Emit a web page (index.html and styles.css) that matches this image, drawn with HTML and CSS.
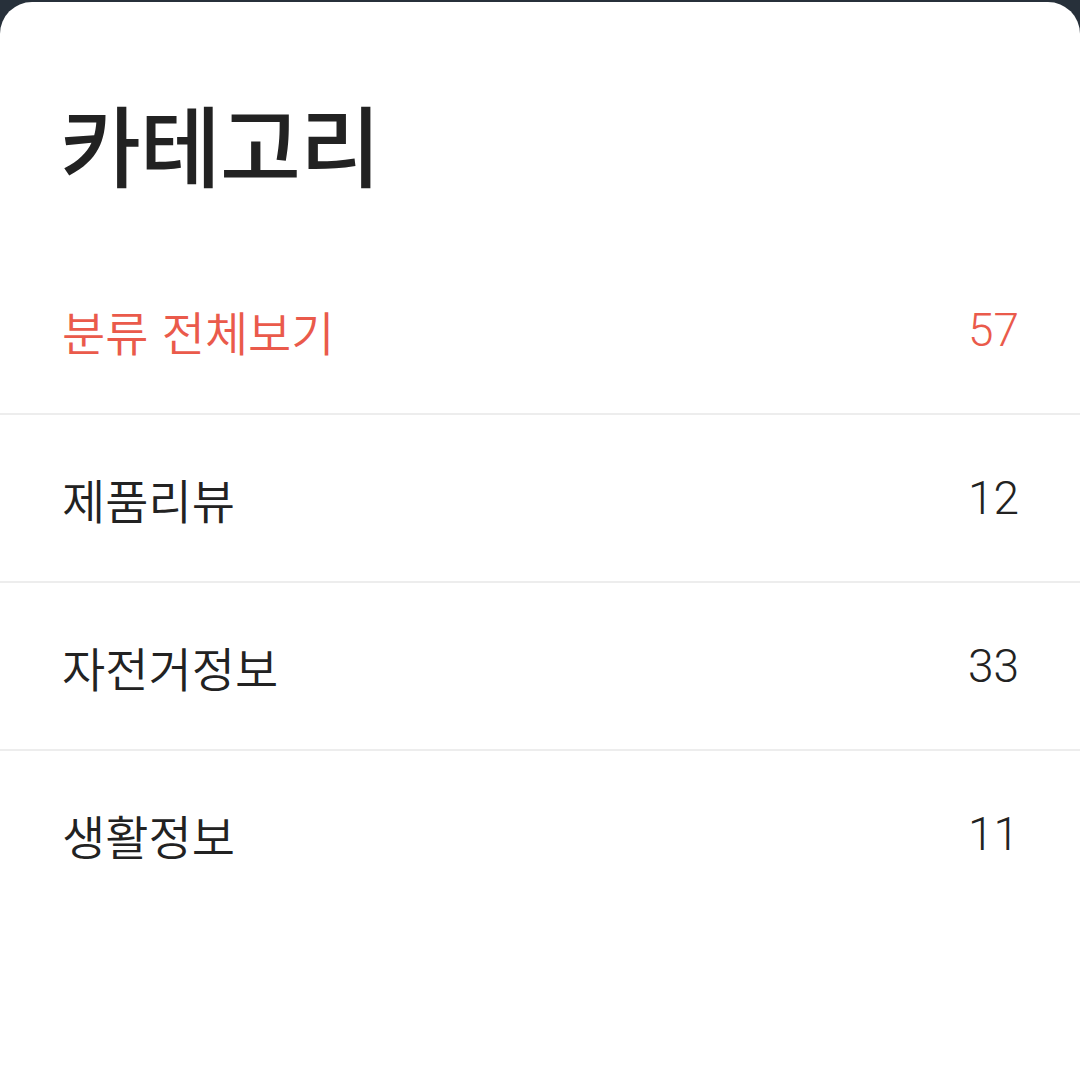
FILE: index.html
```html
<!DOCTYPE html>
<html lang="ko">
<head>
	<meta charset="utf-8">
	<title>카테고리</title>
	<link rel="stylesheet" href="styles.css">
</head>
<body>

	<div class="sheet">
		<h1 class="title">카테고리</h1>

		<ul class="category-list">
			<li class="category active"><span class="name">분류 전체보기</span><span class="count">57</span></li>
			<li class="category"><span class="name">제품리뷰</span><span class="count">12</span></li>
			<li class="category"><span class="name">자전거정보</span><span class="count">33</span></li>
			<li class="category"><span class="name">생활정보</span><span class="count">11</span></li>
		</ul>
	</div>

</body>
</html>
```

FILE: styles.css
```css
html, body{
	margin: 0;
	height: 100%;
}

body{
	background: #27303a;
	padding-top: 2px;
	box-sizing: border-box;
	font-family: "Noto Sans CJK KR", "Noto Sans", sans-serif;
	color: #222;
}

.sheet{
	background: #fff;
	border-radius: 32px 32px 0 0;
	height: 100%;
	padding-top: 84px;
	box-sizing: border-box;
}

.title{
	margin: 0 60px;
	font-size: 88px;
	font-weight: 500;
	line-height: 112px;
	letter-spacing: -1px;
}

.category-list{
	list-style: none;
	margin: 49px 0 0;
	padding: 0;
}

.category{
	display: flex;
	justify-content: space-between;
	align-items: center;
	height: 166px;
	padding: 0 61px 0 62px;
	font-size: 47px;
	font-weight: 350;
	border-bottom: 2px solid #ededed;
}

.category:last-child{
	border-bottom: none;
}

.count{
	font-family: Roboto, "Noto Sans CJK KR", sans-serif;
	font-size: 46px;
	font-weight: 300;
}

.active{
	color: #ea5a4b;
}
```
